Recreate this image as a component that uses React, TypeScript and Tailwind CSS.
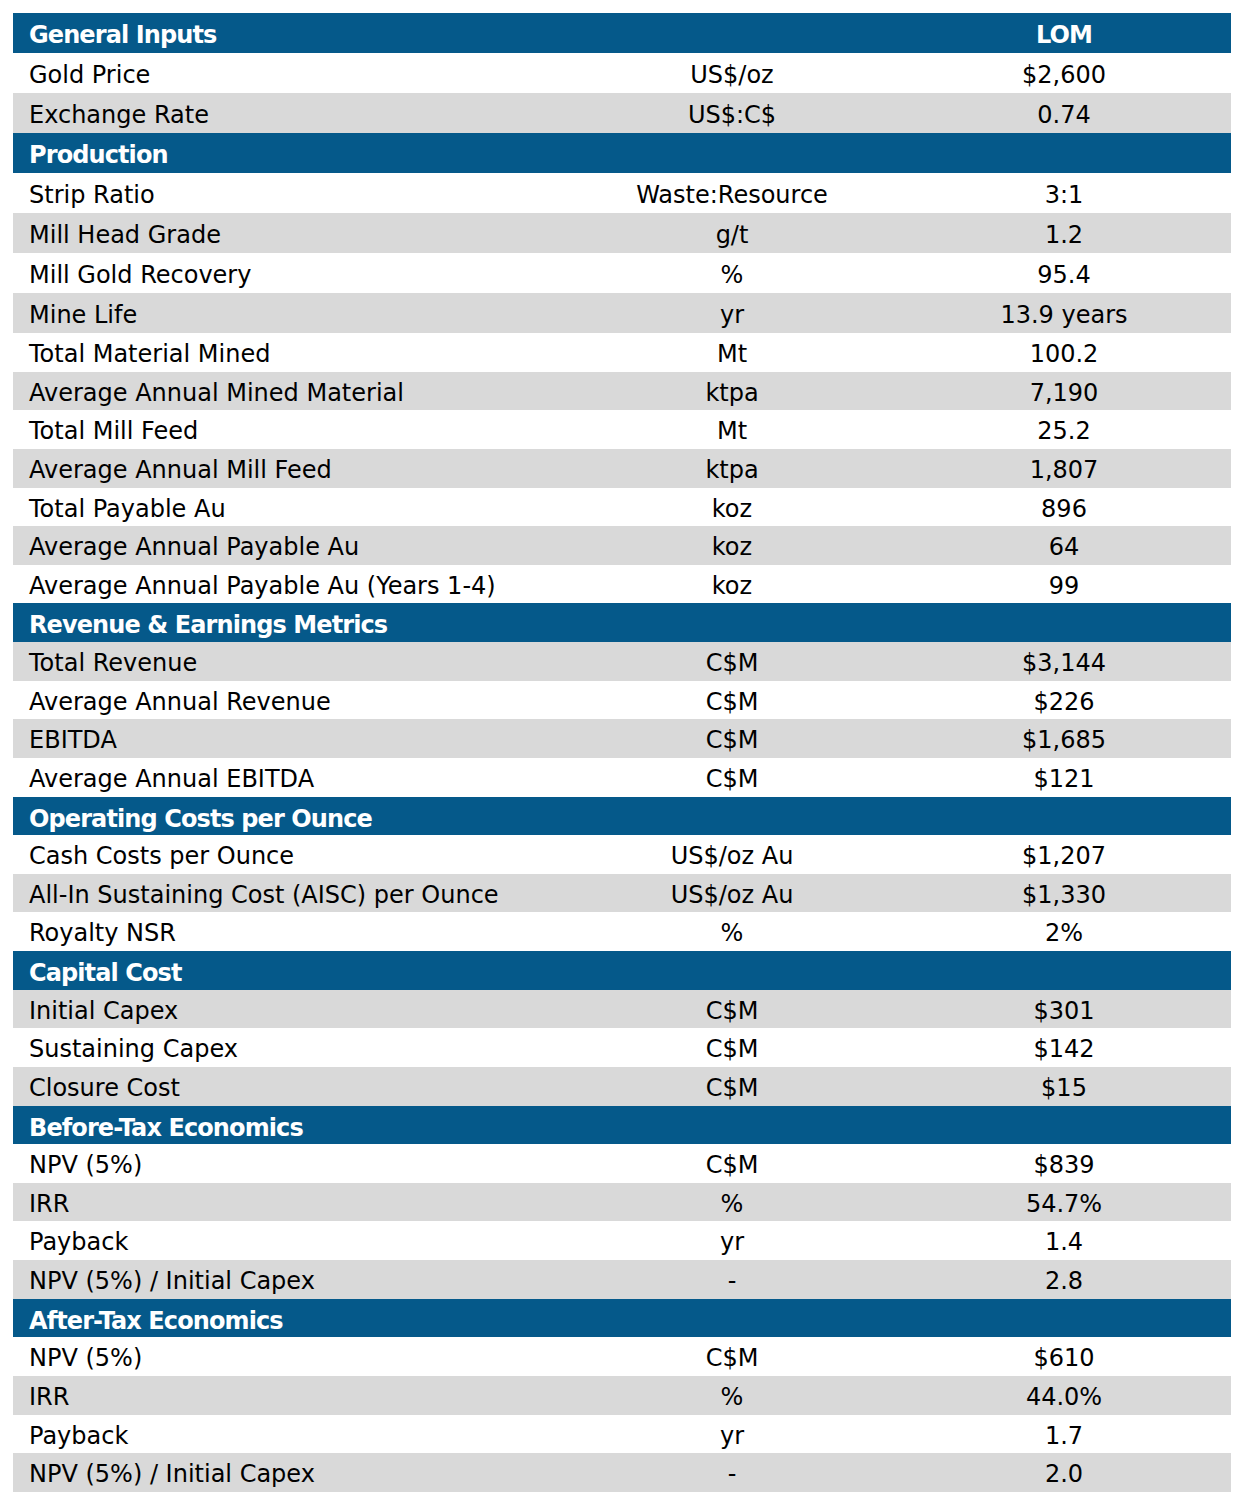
const sections = [
  {
    title: "General Inputs",
    right: "LOM",
    rows: [
      ["Gold Price", "US$/oz", "$2,600"],
      ["Exchange Rate", "US$:C$", "0.74"],
    ],
  },
  {
    title: "Production",
    rows: [
      ["Strip Ratio", "Waste:Resource", "3:1"],
      ["Mill Head Grade", "g/t", "1.2"],
      ["Mill Gold Recovery", "%", "95.4"],
      ["Mine Life", "yr", "13.9 years"],
      ["Total Material Mined", "Mt", "100.2"],
      ["Average Annual Mined Material", "ktpa", "7,190"],
      ["Total Mill Feed", "Mt", "25.2"],
      ["Average Annual Mill Feed", "ktpa", "1,807"],
      ["Total Payable Au", "koz", "896"],
      ["Average Annual Payable Au", "koz", "64"],
      ["Average Annual Payable Au (Years 1-4)", "koz", "99"],
    ],
  },
  {
    title: "Revenue & Earnings Metrics",
    rows: [
      ["Total Revenue", "C$M", "$3,144"],
      ["Average Annual Revenue", "C$M", "$226"],
      ["EBITDA", "C$M", "$1,685"],
      ["Average Annual EBITDA", "C$M", "$121"],
    ],
  },
  {
    title: "Operating Costs per Ounce",
    rows: [
      ["Cash Costs per Ounce", "US$/oz Au", "$1,207"],
      ["All-In Sustaining Cost (AISC) per Ounce", "US$/oz Au", "$1,330"],
      ["Royalty NSR", "%", "2%"],
    ],
  },
  {
    title: "Capital Cost",
    rows: [
      ["Initial Capex", "C$M", "$301"],
      ["Sustaining Capex", "C$M", "$142"],
      ["Closure Cost", "C$M", "$15"],
    ],
  },
  {
    title: "Before-Tax Economics",
    rows: [
      ["NPV (5%)", "C$M", "$839"],
      ["IRR", "%", "54.7%"],
      ["Payback", "yr", "1.4"],
      ["NPV (5%) / Initial Capex", "-", "2.8"],
    ],
  },
  {
    title: "After-Tax Economics",
    rows: [
      ["NPV (5%)", "C$M", "$610"],
      ["IRR", "%", "44.0%"],
      ["Payback", "yr", "1.7"],
      ["NPV (5%) / Initial Capex", "-", "2.0"],
    ],
  },
];

// shading alternates within each section; some sections start gray
const startsGray: Record<string, boolean> = {
  "General Inputs": false,
  Production: false,
  "Revenue & Earnings Metrics": true,
  "Operating Costs per Ounce": false,
  "Capital Cost": true,
  "Before-Tax Economics": false,
  "After-Tax Economics": false,
};

export default function App() {
  let index = 0;

  return (
    <div className="min-h-screen bg-white pt-[13px] pl-[13px] font-['DejaVu_Sans',sans-serif] text-[24px] text-black">
      <div className="w-[1218px]">
        {sections.map((section) => {
          const headerTall = index < 8;
          index++;
          return (
            <div key={section.title}>
              <div
                className={`grid grid-cols-[554px_330px_1fr] items-center bg-[#05598a] pt-[4px] text-white font-bold ${
                  headerTall ? "h-[40px]" : "h-[38.63px]"
                }`}
              >
                <div className="pl-4 tracking-[-0.9px] whitespace-nowrap">{section.title}</div>
                <div />
                <div className="text-center tracking-[-0.9px]">{section.right ?? ""}</div>
              </div>
              {section.rows.map((row, i) => {
                const tall = index < 8;
                index++;
                const gray = startsGray[section.title] ? i % 2 === 0 : i % 2 === 1;
                return (
                  <div
                    key={section.title + row[0]}
                    className={`grid grid-cols-[554px_330px_1fr] items-center pt-[3px] ${
                      gray ? "bg-[#d9d9d9]" : "bg-white"
                    } ${tall ? "h-[40px]" : "h-[38.63px]"}`}
                  >
                    <div className="pl-4 whitespace-nowrap">{row[0]}</div>
                    <div className="text-center whitespace-nowrap">{row[1]}</div>
                    <div className="text-center whitespace-nowrap">{row[2]}</div>
                  </div>
                );
              })}
            </div>
          );
        })}
      </div>
    </div>
  );
}
